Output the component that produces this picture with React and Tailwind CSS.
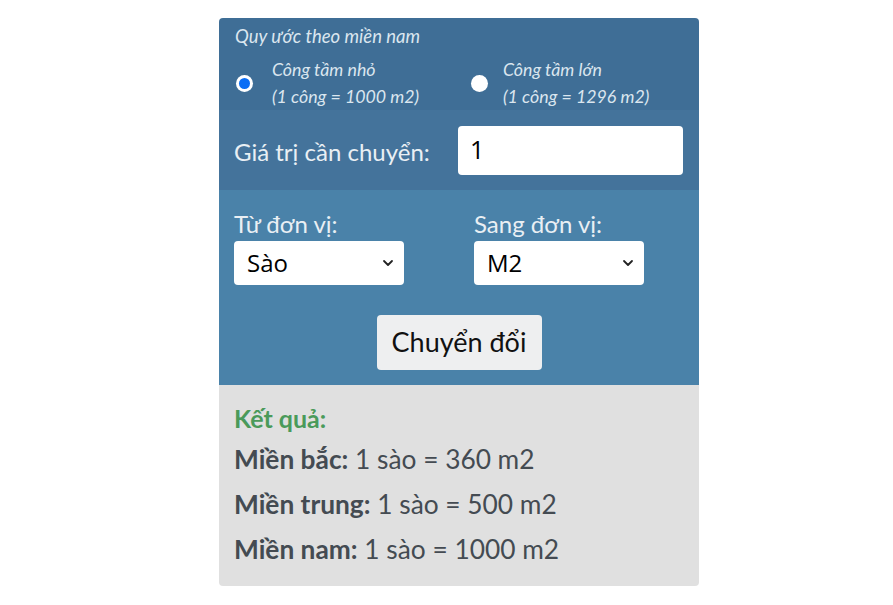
import React from "react";

function Chevron() {
  return (
    <svg width="14" height="14" viewBox="0 0 14 14" className="pointer-events-none absolute right-[9px] top-1/2 -translate-y-1/2">
      <path d="M3 5 L7 9 L11 5" fill="none" stroke="#222" strokeWidth="1.8" strokeLinecap="round" strokeLinejoin="round" />
    </svg>
  );
}

function Select({ value }) {
  return (
    <div className="relative w-[170px] h-[44px]">
      <div className="w-full h-full bg-white rounded-[4px] pl-[13px] flex items-center text-[24px] text-black font-['Open_Sans',sans-serif]">
        {value}
      </div>
      <Chevron />
    </div>
  );
}

export default function App() {
  return (
    <div className="w-[893px] h-[605px] bg-white flex pl-[219px] pt-[18px] font-['Lato',sans-serif]">
      <div className="w-[480px] h-[568px] rounded-[4px] overflow-hidden flex flex-col">
        <div className="bg-[#3f6e96] h-[92px] pl-[16px] pt-[6px] italic text-[#dbe6ef] text-[17.8px]">
          <div className="leading-[24px] text-[18.5px]">Quy ước theo miền nam</div>
          <div className="flex mt-[8px]">
            <div className="flex items-center w-[236px]">
              <div className="w-[17px] h-[17px] rounded-full bg-white flex items-center justify-center ml-[1px]">
                <div className="w-[11px] h-[11px] rounded-full bg-[#0b6ef5]" />
              </div>
              <div className="ml-[19px] leading-[27px]">
                <div>Công tầm nhỏ</div>
                <div>(1 công = 1000 m2)</div>
              </div>
            </div>
            <div className="flex items-center">
              <div className="w-[17px] h-[17px] rounded-full bg-white" />
              <div className="ml-[15px] leading-[27px]">
                <div>Công tầm lớn</div>
                <div>(1 công = 1296 m2)</div>
              </div>
            </div>
          </div>
        </div>
        <div className="bg-[#44739b] h-[80px] flex items-center pl-[15px] pr-[16px]">
          <div className="text-[24px] text-[#e9eff4] w-[224px] mt-[4px]">Giá trị cần chuyển:</div>
          <div className="flex-1 h-[49px] bg-white rounded-[4px] flex items-center pl-[12px] text-[25px] text-black font-['Open_Sans',sans-serif]">1</div>
        </div>
        <div className="bg-[#4a82a9] h-[195px] pl-[15px] pt-[19px]">
          <div className="flex">
            <div className="w-[240px]">
              <div className="text-[24px] text-[#e9eff4] leading-[30px]">Từ đơn vị:</div>
              <div className="mt-[2px]"><Select value="Sào" /></div>
            </div>
            <div>
              <div className="text-[24px] text-[#e9eff4] leading-[30px]">Sang đơn vị:</div>
              <div className="mt-[2px]"><Select value="M2" /></div>
            </div>
          </div>
          <div className="flex justify-center pr-[15px] mt-[30px]">
            <div className="w-[165px] h-[55px] bg-[#eeeff0] rounded-[4px] flex items-center justify-center text-[27px] text-[#111]">Chuyển đổi</div>
          </div>
        </div>
        <div className="bg-[#e0e0e0] flex-1 pl-[15px] pt-[17px] text-[#444b52] text-[26.3px]">
          <div className="text-[25px] font-bold text-[#4a9a5a] leading-[32px]">Kết quả:</div>
          <div className="leading-[45px] mt-[3px]"><span className="font-bold">Miền bắc:</span> 1 sào = 360 m2</div>
          <div className="leading-[45px]"><span className="font-bold">Miền trung:</span> 1 sào = 500 m2</div>
          <div className="leading-[45px]"><span className="font-bold">Miền nam:</span> 1 sào = 1000 m2</div>
        </div>
      </div>
    </div>
  );
}
